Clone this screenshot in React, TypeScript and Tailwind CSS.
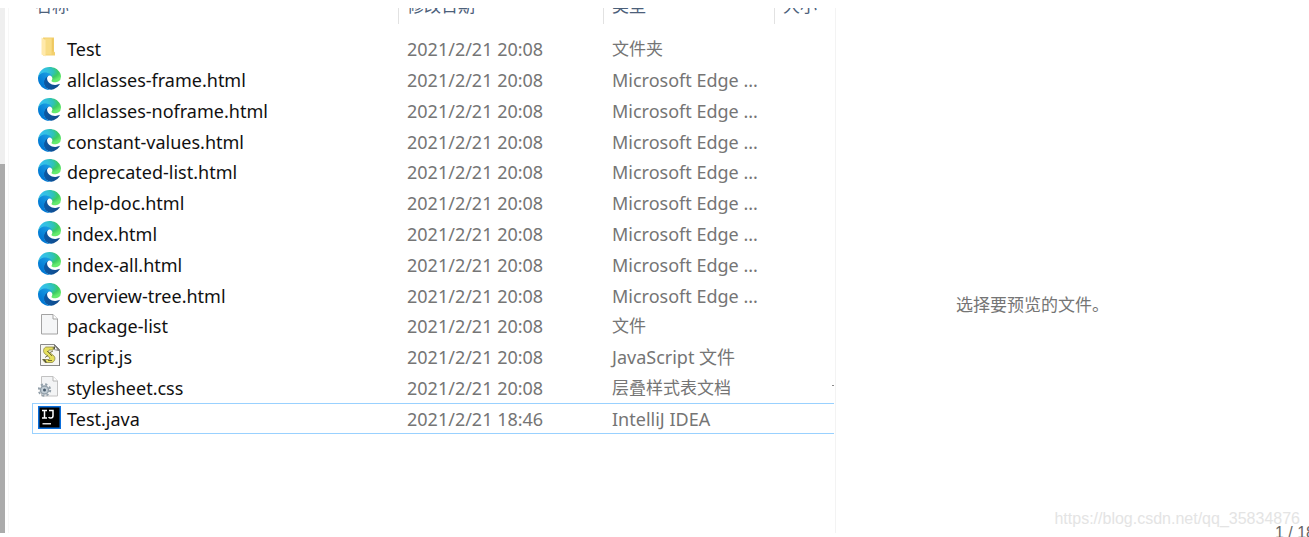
import type { ReactNode } from "react";

type Kind = "folder" | "edge" | "blank" | "script" | "css" | "idea";
type FileRow = { name: string; kind: Kind; date: string; type: string; selected?: boolean };

const EDGE_TYPE = "Microsoft Edge ...";

const files: FileRow[] = [
  { name: "Test", kind: "folder", date: "2021/2/21 20:08", type: "文件夹" },
  { name: "allclasses-frame.html", kind: "edge", date: "2021/2/21 20:08", type: EDGE_TYPE },
  { name: "allclasses-noframe.html", kind: "edge", date: "2021/2/21 20:08", type: EDGE_TYPE },
  { name: "constant-values.html", kind: "edge", date: "2021/2/21 20:08", type: EDGE_TYPE },
  { name: "deprecated-list.html", kind: "edge", date: "2021/2/21 20:08", type: EDGE_TYPE },
  { name: "help-doc.html", kind: "edge", date: "2021/2/21 20:08", type: EDGE_TYPE },
  { name: "index.html", kind: "edge", date: "2021/2/21 20:08", type: EDGE_TYPE },
  { name: "index-all.html", kind: "edge", date: "2021/2/21 20:08", type: EDGE_TYPE },
  { name: "overview-tree.html", kind: "edge", date: "2021/2/21 20:08", type: EDGE_TYPE },
  { name: "package-list", kind: "blank", date: "2021/2/21 20:08", type: "文件" },
  { name: "script.js", kind: "script", date: "2021/2/21 20:08", type: "JavaScript 文件" },
  { name: "stylesheet.css", kind: "css", date: "2021/2/21 20:08", type: "层叠样式表文档" },
  { name: "Test.java", kind: "idea", date: "2021/2/21 18:46", type: "IntelliJ IDEA", selected: true },
];

const hasLatin = (text: string) => /[A-Za-z]/.test(text);

function Svg({ box = "0 0 24 24", children }: { box?: string; children: ReactNode }) {
  return (
    <svg viewBox={box} className="-mt-0.5 size-6 shrink-0" aria-hidden="true">
      {children}
    </svg>
  );
}

function EdgeIcon() {
  return (
    <Svg box="0 0 267 267">
      <path
        fill="url(#edge-deep)"
        d="M235.68 188.07a93.73 93.73 0 0 1-10.54 4.71 101.87 101.87 0 0 1-35.9 6.46c-47.32 0-88.54-32.55-88.54-74.32A31.48 31.48 0 0 1 117.13 97.9c-42.8 1.8-53.8 46.4-53.8 72.53 0 73.88 68.09 81.37 82.76 81.37 7.91 0 19.84-2.3 27-4.56l1.31-.44a128.34 128.34 0 0 0 66.6-52.8 4 4 0 0 0-5.32-5.93Z"
      />
      <path
        fill="url(#edge-blue)"
        d="M105.73 241.42A79.2 79.2 0 0 1 83 220.08a80.72 80.72 0 0 1 29.54-120.25c3.12-1.47 8.45-4.13 15.54-4a32.35 32.35 0 0 1 25.69 13 31.88 31.88 0 0 1 6.36 18.66c0-.21 24.46-79.6-80-79.6-43.9 0-80 41.66-80 78.21a130.15 130.15 0 0 0 12.11 56 128 128 0 0 0 156.38 67.11 75.55 75.55 0 0 1-62.78-8Z"
      />
      <path
        fill="url(#edge-green)"
        d="M152.33 148.86c-.81 1.05-3.3 2.5-3.3 5.66 0 2.61 1.7 5.12 4.72 7.23 14.38 10 41.49 8.68 41.56 8.68a59.56 59.56 0 0 0 30.27-8.33A61.38 61.38 0 0 0 256 109.2c.26-22.43-8-37.34-11.35-43.94C223.44 23.8 177.66 0 128 0A128 128 0 0 0 0 126.2c.48-36.54 36.8-66.05 80-66.05 3.5 0 23.46.34 42 10.07 16.34 8.58 24.9 18.94 30.85 29.21 6.18 10.67 7.28 24.15 7.28 29.52s-2.74 13.38-7.8 19.91Z"
      />
    </Svg>
  );
}

function EdgeGradients() {
  return (
    <svg className="absolute size-0" aria-hidden="true">
      <defs>
        <linearGradient id="edge-deep" gradientUnits="userSpaceOnUse" x1="63" y1="177" x2="241" y2="177">
          <stop offset="0" stopColor="#0c59a4" />
          <stop offset="1" stopColor="#114a8b" />
        </linearGradient>
        <linearGradient id="edge-blue" gradientUnits="userSpaceOnUse" x1="157" y1="100" x2="46" y2="222">
          <stop offset="0" stopColor="#1b9de2" />
          <stop offset="0.2" stopColor="#1595df" />
          <stop offset="0.7" stopColor="#0680d7" />
          <stop offset="1" stopColor="#0078d4" />
        </linearGradient>
        <radialGradient
          id="edge-green"
          gradientUnits="userSpaceOnUse"
          cx="0"
          cy="0"
          r="1"
          gradientTransform="matrix(-8 202 -431 -17 26 47)"
          fx="0"
          fy="0"
        >
          <stop offset="0" stopColor="#35c1f1" />
          <stop offset="0.2" stopColor="#34c1dd" />
          <stop offset="0.34" stopColor="#2fc2b8" />
          <stop offset="0.46" stopColor="#3ccb62" />
          <stop offset="0.6" stopColor="#66eb6e" />
        </radialGradient>
      </defs>
    </svg>
  );
}

function FolderIcon() {
  return (
    <Svg>
      <path fill="#f3d06e" d="M5 1.500h11v14l1 1v3H5z" />
      <path fill="#f8dc85" d="M7 2.500h6.500v16H7z" />
      <path fill="#ffe9ab" d="M3.500 1.500l4 2.500v16.500l-4-2z" />
      <path fill="#e9bf55" d="M14.500 2.500h.8v13h-.8z" />
    </Svg>
  );
}

function BlankIcon() {
  return (
    <Svg>
      <path fill="#f5f6f7" stroke="#a3a3a3" d="M3.500 1.500h11.500l4.500 4.500v15H3.500z" />
      <path fill="#fff" stroke="#a3a3a3" d="M15 1.500V6h4.500" />
    </Svg>
  );
}

function ScriptIcon() {
  return (
    <Svg>
      <path fill="#f7f7f4" stroke="#8a8a8a" d="M2.500 .500h14l5 5v16h-19z" />
      <path fill="#777" d="M16 0l6 6v16h-1V7l-5-1z" />
      <path fill="#fff" d="M16.500 2l3 3.500h-3z" />
      <path
        fill="#e6e05c"
        stroke="#8b8748"
        strokeWidth="0.8"
        d="M8 3h9l-2 3h-4l-.500 1.500 5.500 4.500c2 2 .500 6-2 6.500H7l-2.500-3H11l1-1.500-5.500-4.500C4.500 7 6 3.500 8 3z"
      />
      <path stroke="#55532a" strokeWidth="0.8" fill="none" d="M9 7l5 5M12 8.500l3-1.500M7 13.500l3-2M10 16.500h4" />
      <path fill="#4c4c42" d="M14 4l3-1v2zM4.500 15l3 3.500H9l-2-3z" />
    </Svg>
  );
}

function CssIcon() {
  return (
    <Svg>
      <path fill="#f3f4f5" stroke="#c2c2c2" d="M3.500 1.500h11.500l4.500 4.500v15H3.500z" />
      <path fill="#fff" stroke="#b4b4b4" d="M15 1.500V6h4.500" />
      <circle cx="6.500" cy="15" r="5.700" fill="none" stroke="#93a0aa" strokeWidth="2" strokeDasharray="2.200 2.277" />
      <circle cx="6.500" cy="15" r="4" fill="#c3ced6" stroke="#93a0aa" strokeWidth="1.500" />
      <circle cx="6.500" cy="15" r="1.500" fill="#46596a" />
    </Svg>
  );
}

function IdeaIcon() {
  return (
    <Svg>
      <path fill="#0a6edc" d="M0 0h23v23H0z" />
      <path fill="#000" d="M1.500 1.500h20v20h-20z" />
      <path
        fill="none"
        stroke="#fff"
        strokeWidth="1.500"
        d="M4 4.500h5M6.500 4.500v7.500M4 12h5M11 4.500h4v5.300c0 1.600-.8 2.300-2.200 2.300-.9 0-1.700-.3-2.200-1"
      />
      <path fill="#ddd" d="M4.500 17h8.500v1.500H4.500z" />
    </Svg>
  );
}

const icons: Record<Kind, () => ReactNode> = {
  folder: FolderIcon,
  edge: EdgeIcon,
  blank: BlankIcon,
  script: ScriptIcon,
  css: CssIcon,
  idea: IdeaIcon,
};

function HeadCell({ children, first }: { children: ReactNode; first?: boolean }) {
  return (
    <th scope="col" className="p-0 text-left align-top font-normal">
      <div
        className={
          first
            ? "flex h-4 items-end overflow-hidden pb-2 pl-[3px]"
            : "flex h-4 items-end overflow-hidden border-l border-[#e2e2e2] pb-2 pl-2"
        }
      >
        <span className="leading-5 text-[#4c607a]">{children}</span>
      </div>
    </th>
  );
}

function Columns() {
  return (
    <colgroup>
      <col />
      <col className="w-[205px]" />
      <col className="w-[171px]" />
      <col className="w-[60px]" />
    </colgroup>
  );
}

export default function App() {
  return (
    <div className="relative flex h-screen flex-col overflow-hidden bg-white pt-2 pb-1 font-['Noto_Sans','Noto_Sans_CJK_SC',sans-serif] text-[17px] leading-6 text-[#757575]">
      <EdgeGradients />
      <main className="flex min-h-0 flex-1">
        <div className="flex w-[5px] shrink-0 flex-col bg-[#efefef] pt-[156px]">
          <div className="flex-1 bg-[#ababab]" />
        </div>
        <div className="w-1 shrink-0 border-r border-[#f7f7f7]" />

        <section className="w-[827px] shrink-0 border-r border-[#f3f3f3] pr-px pl-[23px]">
          <table className="w-full table-fixed border-collapse">
            <Columns />
            <thead>
              <tr>
                <HeadCell first>名称</HeadCell>
                <HeadCell>修改日期</HeadCell>
                <HeadCell>类型</HeadCell>
                <HeadCell>大小</HeadCell>
              </tr>
            </thead>
          </table>
          <table className="mt-[10px] h-[400px] w-full table-fixed border-separate border-spacing-0">
            <Columns />
            <tbody>
              {files.map((file) => {
                const Icon = icons[file.kind];
                const cell = file.selected
                  ? "p-0 shadow-[inset_0_1px_0_#99d1ff,inset_0_-1px_0_#99d1ff]"
                  : "p-0";
                return (
                  <tr key={file.name}>
                    <td
                      className={
                        file.selected
                          ? "p-0 shadow-[inset_1px_0_0_#99d1ff,inset_0_1px_0_#99d1ff,inset_0_-1px_0_#99d1ff]"
                          : "p-0"
                      }
                    >
                      <div className="flex h-6 items-center gap-[5px] pl-1.5 text-lg/6">
                        <Icon />
                        <span className="text-[#111]">{file.name}</span>
                      </div>
                    </td>
                    <td className={cell}>
                      <div className="pl-[9px] text-lg/6">{file.date}</div>
                    </td>
                    <td className={cell}>
                      <div
                        className={
                          hasLatin(file.type)
                            ? "pl-[9px] text-lg/6 whitespace-nowrap"
                            : "pl-[9px] text-[17px]/6 whitespace-nowrap"
                        }
                      >
                        {file.type}
                      </div>
                    </td>
                    <td className={cell}>
                      {file.kind === "css" && <div className="mb-1 ml-auto h-px w-0.5 bg-[#8a8a8a]" />}
                    </td>
                  </tr>
                );
              })}
            </tbody>
          </table>
        </section>

        <aside className="flex flex-1 items-center justify-center pt-[68px] pr-20">
          <p>选择要预览的文件。</p>
        </aside>
      </main>

      <div className="absolute right-[9px] bottom-2 font-['Liberation_Sans',sans-serif] text-base leading-5 text-[#e4e4e4]">
        https://blog.csdn.net/qq_35834876
      </div>
      <div className="absolute -right-1.5 -bottom-1.5 font-['Liberation_Sans',sans-serif] text-base leading-5 text-[#666]">
        1 / 18
      </div>
    </div>
  );
}
